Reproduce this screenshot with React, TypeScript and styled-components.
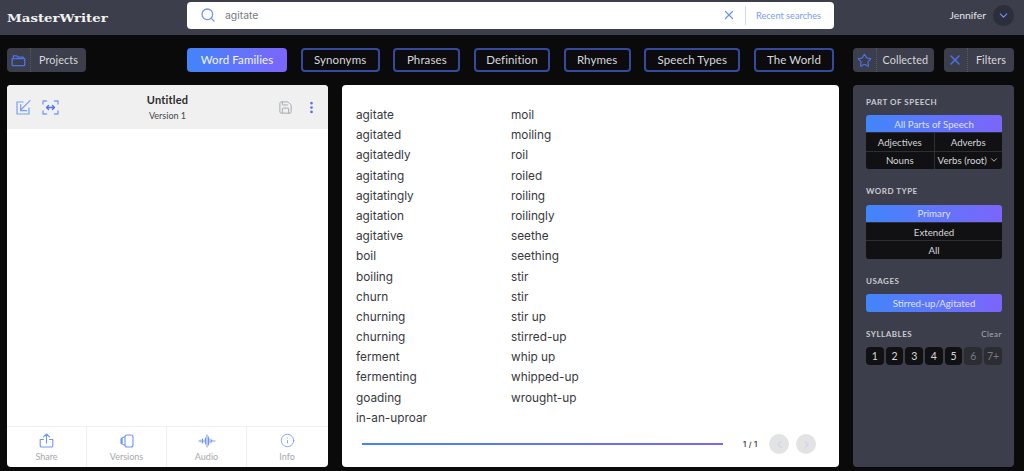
import styled, {createGlobalStyle} from "styled-components";
import {
    ChevronDown,
    ChevronLeft,
    ChevronRight,
    EllipsisVertical,
    Info,
    Save,
    Search,
    Star,
    X,
} from "lucide-react";

const GlobalStyle = createGlobalStyle`
  html, body {
    margin: 0;
    padding: 0;
    background: #0a0a0b;
    font-family: "Lato", "Noto Sans", sans-serif;
  }
  * { box-sizing: border-box; }
`;

const BLUE = "#6d95f5";
const GRADIENT = "linear-gradient(90deg, #4285fb, #7c65fb)";

const Page = styled.div`
  width: 1024px;
  height: 471px;
  overflow: hidden;
  display: flex;
  flex-direction: column;
`;
const Header = styled.header`
  height: 35px;
  background: #3c3e4b;
  display: flex;
  align-items: center;
  padding: 0 10px 5px 7px;
`;
const LogoBox = styled.div`
  width: 180px;
`;
const Logo = styled.div`
  display: inline-block;
  font-family: "DejaVu Serif", serif;
  font-weight: 700;
  font-size: 10.5px;
  color: #f2f2f2;
  transform: scaleX(1.27);
  transform-origin: left center;
`;
const SearchBar = styled.div`
  width: 647px;
  height: 27px;
  background: #fff;
  border-radius: 4px;
  display: flex;
  align-items: center;
  padding: 0 13px 0 13px;
  color: ${BLUE};
`;
const SearchText = styled.span`
  flex: 1;
  margin-left: 9px;
  font-family: "Inter", sans-serif;
  font-size: 10.4px;
  color: #77797f;
`;
const Divider = styled.span`
  width: 1px;
  height: 19px;
  background: #cfdcf8;
  margin: 0 10px 0 9px;
`;
const Recent = styled.span`
  font-size: 9.2px;
  color: #7d9cf3;
`;
const User = styled.div`
  flex: 1;
  display: flex;
  justify-content: flex-end;
  align-items: center;
  gap: 7px;
  font-size: 10.4px;
  color: #e4e5e8;
`;
const Avatar = styled.span`
  width: 21px;
  height: 21px;
  border-radius: 50%;
  background: #2d2e3b;
  color: ${BLUE};
  display: flex;
  align-items: center;
  justify-content: center;
`;
const Toolbar = styled.nav`
  height: 50px;
  display: flex;
  align-items: center;
  padding: 0 10px 0 7px;
`;
const SideButton = styled.div<{ $width: number; $ml: number }>`
  width: ${(p) => p.$width}px;
  margin-left: ${(p) => p.$ml}px;
  height: 24px;
  background: #3c3e4b;
  border-radius: 4px;
  display: flex;
  align-items: center;
  font-size: 10.8px;
  letter-spacing: 0.1px;
  color: #d8d9dd;
`;
const SideIcon = styled.span`
  width: 24px;
  height: 100%;
  flex: none;
  display: flex;
  align-items: center;
  justify-content: center;
  color: #4b73e6;
  border-right: 1px dotted #565865;
`;
const SideLabel = styled.span`
  flex: 1;
  text-align: center;
  padding-bottom: 2px;
`;
const Tabs = styled.div`
  display: flex;
  gap: 13.67px;
  margin-left: 101px;
`;
const Tab = styled.div<{ $active?: boolean; $width: number }>`
  width: ${(p) => p.$width}px;
  height: 24px;
  border-radius: 4px;
  display: flex;
  align-items: center;
  justify-content: center;
  padding-bottom: 2px;
  font-size: 11.5px;
  letter-spacing: 0.1px;
  color: ${(p) => (p.$active ? "#f4f5ff" : "#d8d9dd")};
  background: ${(p) => (p.$active ? GRADIENT : "#0c0c0e")};
  border: ${(p) => (p.$active ? "none" : "2px solid #354a9e")};
`;
const Main = styled.main`
  flex: 1;
  display: flex;
  padding: 0 10px 4px 7px;
`;
const Editor = styled.section`
  width: 321px;
  background: #fff;
  border-radius: 4px;
  display: flex;
  flex-direction: column;
  overflow: hidden;
`;
const EditorHead = styled.div`
  height: 44px;
  background: #f0f0f0;
  display: flex;
  align-items: center;
  padding: 0 9px 0 9px;
  color: ${BLUE};
`;
const HeadIcons = styled.div`
  display: flex;
  align-items: center;
  gap: 11px;
`;
const TitleBlock = styled.div`
  flex: 1;
  text-align: center;
  padding-right: 2px;
`;
const Title = styled.div`
  font-size: 11px;
  font-weight: 700;
  letter-spacing: 0.2px;
  color: #2b2b2e;
`;
const Version = styled.div`
  font-size: 9px;
  margin-top: 4px;
  color: #45464b;
`;
const EditorBody = styled.div`
  flex: 1;
`;
const EditorFoot = styled.div`
  height: 41px;
  display: grid;
  grid-template-columns: repeat(4, 80px);
  border-top: 1px solid #f0f0f2;
`;
const FootItem = styled.div`
  display: flex;
  flex-direction: column;
  align-items: center;
  justify-content: flex-end;
  gap: 3px;
  padding-bottom: 5px;
  font-size: 9px;
  color: #a6a8ad;
  border-right: 1px solid #f0f0f2;
  &:last-child { border-right: none; }
  svg { color: ${BLUE}; }
`;
const Results = styled.section`
  width: 497px;
  margin-left: 14px;
  background: #fff;
  border-radius: 4px;
  display: flex;
  flex-direction: column;
  padding: 20px 23px 0 14px;
`;
const WordGrid = styled.div`
  display: grid;
  grid-template-rows: repeat(16, 20.2px);
  grid-auto-flow: column;
  grid-template-columns: 155px 155px;
  font-family: "Inter", sans-serif;
  font-size: 11.8px;
  line-height: 20.2px;
  color: #37383c;
`;
const Pager = styled.div`
  display: flex;
  align-items: center;
  margin: 6px 0 0 6px;
`;
const Progress = styled.div`
  flex: none;
  width: 361px;
  height: 2px;
  background: ${GRADIENT};
`;
const PageNum = styled.span`
  flex: none;
  width: 16px;
  margin: 0 10px 0 20px;
  white-space: nowrap;
  font-family: "Inter", sans-serif;
  font-weight: 600;
  font-size: 7.5px;
  letter-spacing: 0.3px;
  color: #44454a;
`;
const PageButton = styled.span`
  flex: none;
  width: 20px;
  height: 20px;
  margin-right: 7px;
  border-radius: 50%;
  background: #e3e3e3;
  color: #b4c6f6;
  display: flex;
  align-items: center;
  justify-content: center;
`;
const Filters = styled.aside`
  width: 161px;
  margin-left: 14px;
  background: #3c3e4b;
  border-radius: 4px;
  padding: 11px 12px 0 13px;
`;
const SectionHead = styled.div`
  height: 11px;
  margin-bottom: 8px;
  display: flex;
  justify-content: space-between;
  align-items: center;
  font-size: 8px;
  font-weight: 700;
  letter-spacing: 0.5px;
  color: #c9cad0;
`;
const Clear = styled.span`
  font-weight: 400;
  font-size: 8px;
  color: #a9abb2;
`;
const Group = styled.div`
  margin-bottom: 16.500px;
  border-radius: 3px;
  overflow: hidden;
  display: grid;
  grid-template-columns: 1fr 1fr;
  gap: 1px;
  background: #2d2e38;
`;
const Option = styled.div<{ $active?: boolean; $wide?: boolean }>`
  grid-column: ${(p) => (p.$wide ? "1 / -1" : "auto")};
  height: 17.4px;
  display: flex;
  align-items: center;
  justify-content: center;
  gap: 2px;
  font-size: 9.7px;
  color: ${(p) => (p.$active ? "#dfe2f7" : "#d6d7da")};
  background: ${(p) => (p.$active ? GRADIENT : "#111113")};
`;
const Numbers = styled.div`
  display: flex;
  gap: 2px;
`;
const NumberKey = styled.div<{ $off?: boolean }>`
  width: 17.7px;
  height: 18px;
  border-radius: 4px;
  display: flex;
  align-items: center;
  justify-content: center;
  font-size: 10.5px;
  background: ${(p) => (p.$off ? "#2c2d33" : "#111113")};
  color: ${(p) => (p.$off ? "#77787e" : "#d6d7da")};
`;

const tabs = [
    {label: "Word Families", width: 100},
    {label: "Synonyms", width: 79},
    {label: "Phrases", width: 67},
    {label: "Definition", width: 76},
    {label: "Rhymes", width: 67},
    {label: "Speech Types", width: 96},
    {label: "The World", width: 80},
];

const words = [
    "agitate", "agitated", "agitatedly", "agitating", "agitatingly", "agitation", "agitative", "boil",
    "boiling", "churn", "churning", "churning", "ferment", "fermenting", "goading", "in-an-uproar",
    "moil", "moiling", "roil", "roiled", "roiling", "roilingly", "seethe", "seething",
    "stir", "stir", "stir up", "stirred-up", "whip up", "whipped-up", "wrought-up",
];

function FolderIcon() {
    return (
        <svg width="15" height="15" viewBox="0 0 16 16" fill="none" stroke="currentColor" strokeWidth="1.4" strokeLinejoin="round">
            <path d="M2.500 6V3h3.500l1.200 1.300H13V6"/>
            <path d="M1.200 6h13.400v6.500a1 1 0 0 1-1 1H2.200a1 1 0 0 1-1-1z"/>
        </svg>
    );
}

function InsertIcon() {
    return (
        <svg width="15" height="15" viewBox="0 0 15 15" fill="none" stroke="#7aa0f5" strokeWidth="1.2" strokeLinecap="round">
            <path d="M7 2H1v12h12V8"/>
            <path d="M14 .7L4.700 10M4.700 4.700v6h6"/>
        </svg>
    );
}

function ExpandIcon() {
    return (
        <svg width="17" height="15" viewBox="0 0 17 15" fill="none" stroke="#7aa0f5" strokeWidth="1.4" strokeLinecap="round" strokeLinejoin="round">
            <path d="M1 4V1h3.500M12.500 1H16v3M16 11v3h-3.500M4.500 14H1v-3"/>
            <path d="M4.500 7.500h8M6.500 5.500l-2 2 2 2M10.500 5.500l2 2-2 2" stroke="#4f78e8"/>
        </svg>
    );
}

function ShareIcon() {
    return (
        <svg width="15" height="15" viewBox="0 0 15 15" fill="none" stroke="currentColor" strokeWidth="1.1" strokeLinecap="round" strokeLinejoin="round">
            <path d="M7.500 10V1M4.500 3.800l3-2.800 3 2.800"/>
            <path d="M4.500 6.500H1.200v6a1.500 1.500 0 0 0 1.500 1.500h9.600a1.500 1.500 0 0 0 1.500-1.500v-6h-3.300"/>
        </svg>
    );
}

function VersionsIcon() {
    return (
        <svg width="14" height="14" viewBox="0 0 14 14" fill="none" stroke="currentColor" strokeWidth="1.1" strokeLinejoin="round">
            <rect x="5" y="1" width="8" height="12" rx="2"/>
            <path d="M5 2.800L2.800 3.600a1 1 0 0 0-.7 1v4.800a1 1 0 0 0 .7 1L5 11.200M2.200 4L1 4.800v4.400l1.200.8"/>
        </svg>
    );
}

function AudioIcon() {
    return (
        <svg width="18" height="14" viewBox="0 0 18 14" fill="none" stroke="currentColor" strokeWidth="1" strokeLinecap="round">
            <path d="M1 7h1M3 6v2M4.500 5v4M6 6v2M7.500 4v6M9 1v12M10.500 3v8M12 5v4M13.500 6v2M15 6.500v1M16.500 7h.5"/>
        </svg>
    );
}

function App() {
    return (
        <Page>
            <GlobalStyle/>
            <Header>
                <LogoBox><Logo>MasterWriter</Logo></LogoBox>
                <SearchBar>
                    <Search size={16} strokeWidth={1.9}/>
                    <SearchText>agitate</SearchText>
                    <X size={14} strokeWidth={2.2}/>
                    <Divider/>
                    <Recent>Recent searches</Recent>
                </SearchBar>
                <User>
                    Jennifer
                    <Avatar><ChevronDown size={13}/></Avatar>
                </User>
            </Header>
            <Toolbar>
                <SideButton $width={79} $ml={0}>
                    <SideIcon><FolderIcon/></SideIcon>
                    <SideLabel>Projects</SideLabel>
                </SideButton>
                <Tabs>
                    {tabs.map((t, i) => (
                        <Tab key={t.label} $active={i === 0} $width={t.width}>{t.label}</Tab>
                    ))}
                </Tabs>
                <SideButton $width={81} $ml={19}>
                    <SideIcon><Star size={15} strokeWidth={1.8}/></SideIcon>
                    <SideLabel>Collected</SideLabel>
                </SideButton>
                <SideButton $width={70} $ml={10}>
                    <SideIcon><X size={16} strokeWidth={2.2}/></SideIcon>
                    <SideLabel>Filters</SideLabel>
                </SideButton>
            </Toolbar>
            <Main>
                <Editor>
                    <EditorHead>
                        <HeadIcons>
                            <InsertIcon/>
                            <ExpandIcon/>
                        </HeadIcons>
                        <TitleBlock>
                            <Title>Untitled</Title>
                            <Version>Version 1</Version>
                        </TitleBlock>
                        <HeadIcons>
                            <Save size={15} color="#a5abb5" strokeWidth={1.6}/>
                            <EllipsisVertical size={15} strokeWidth={2.4} color="#5b78e0"/>
                        </HeadIcons>
                    </EditorHead>
                    <EditorBody/>
                    <EditorFoot>
                        <FootItem><ShareIcon/>Share</FootItem>
                        <FootItem><VersionsIcon/>Versions</FootItem>
                        <FootItem><AudioIcon/>Audio</FootItem>
                        <FootItem><Info size={15} strokeWidth={1.3}/>Info</FootItem>
                    </EditorFoot>
                </Editor>
                <Results>
                    <WordGrid>
                        {words.map((w, i) => <div key={i}>{w}</div>)}
                    </WordGrid>
                    <Pager>
                        <Progress/>
                        <PageNum>1 / 1</PageNum>
                        <PageButton><ChevronLeft size={13} strokeWidth={1.5}/></PageButton>
                        <PageButton><ChevronRight size={13} strokeWidth={1.5}/></PageButton>
                    </Pager>
                </Results>
                <Filters>
                    <SectionHead>PART OF SPEECH</SectionHead>
                    <Group>
                        <Option $active $wide>All Parts of Speech</Option>
                        <Option>Adjectives</Option>
                        <Option>Adverbs</Option>
                        <Option>Nouns</Option>
                        <Option>Verbs (root)<ChevronDown size={10}/></Option>
                    </Group>
                    <SectionHead>WORD TYPE</SectionHead>
                    <Group>
                        <Option $active $wide>Primary</Option>
                        <Option $wide>Extended</Option>
                        <Option $wide>All</Option>
                    </Group>
                    <SectionHead>USAGES</SectionHead>
                    <Group>
                        <Option $active $wide>Stirred-up/Agitated</Option>
                    </Group>
                    <SectionHead>SYLLABLES<Clear>Clear</Clear></SectionHead>
                    <Numbers>
                        {["1", "2", "3", "4", "5", "6", "7+"].map((n, i) => (
                            <NumberKey key={n} $off={i > 4}>{n}</NumberKey>
                        ))}
                    </Numbers>
                </Filters>
            </Main>
        </Page>
    );
}

export default App;
